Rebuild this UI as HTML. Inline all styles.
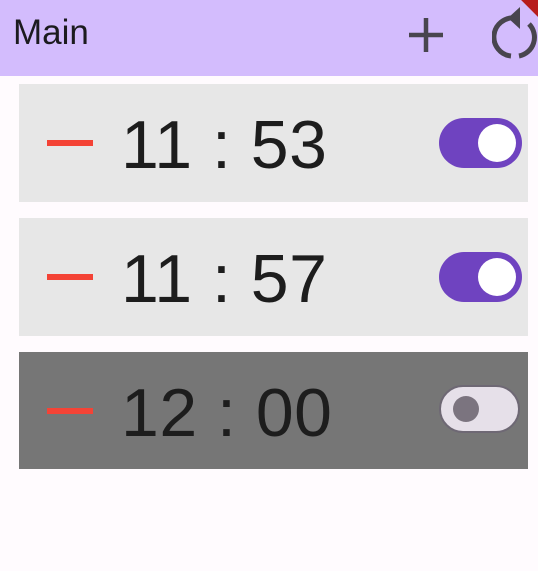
<!DOCTYPE html>
<html><head><style>
body{margin:0;width:538px;height:571px;background:#fffbfe;font-family:"Liberation Sans",sans-serif;position:relative;overflow:hidden}
.hd{position:absolute;left:0;top:0;width:538px;height:76px;background:#d3bcfd}
.t{position:absolute;left:13px;top:13px;font-size:35px;color:#1c1b1f}
.card{position:absolute;left:19px;width:509px;height:118px;background:#e7e7e7}
.m{position:absolute;left:28px;top:56px;width:46px;height:6px;background:#f44336}
.tm{position:absolute;left:102px;top:22px;font-size:68px;color:#1d1d1d;letter-spacing:0.5px;white-space:pre}
.sw{position:absolute;left:420px;top:34px;width:83px;height:50px;border-radius:25px;background:#6f43c0}
.sw i{position:absolute;right:6px;top:6px;width:38px;height:38px;border-radius:50%;background:#fff}
.off{background:#e6e0e9;border:2px solid #6e6874;width:77px;height:44px;left:420px;top:33px;box-sizing:content-box}
.off i{left:12px;top:9px;width:26px;height:26px;background:#7b747f}
</style></head><body>
<div class="hd"><div class="t">Main</div>
<svg style="position:absolute;left:404px;top:13px" width="44" height="44" viewBox="0 0 44 44"><path d="M22 5V39M5 22H39" stroke="#48454e" stroke-width="4.5"/></svg>
<svg style="position:absolute;left:492px;top:2px" width="46" height="60" viewBox="0 0 46 60"><path d="M23 16A19 19 0 0 0 19 54M27 54A19 19 0 0 0 37 22" fill="none" stroke="#48454e" stroke-width="5"/><path d="M28 5L16 16L28 27Z" fill="#48454e"/></svg>
<div style="position:absolute;right:-14px;top:-6px;width:40px;height:14px;background:#b71c1c;transform:rotate(45deg)"></div>
</div>
<div class="card" style="top:84px"><div class="m"></div><div class="tm">11 : 53</div><div class="sw"><i></i></div></div>
<div class="card" style="top:218px"><div class="m"></div><div class="tm">11 : 57</div><div class="sw"><i></i></div></div>
<div class="card" style="top:352px;height:117px;background:#767676"><div class="m"></div><div class="tm">12 : 00</div><div class="sw off"><i></i></div></div>
</body></html>
